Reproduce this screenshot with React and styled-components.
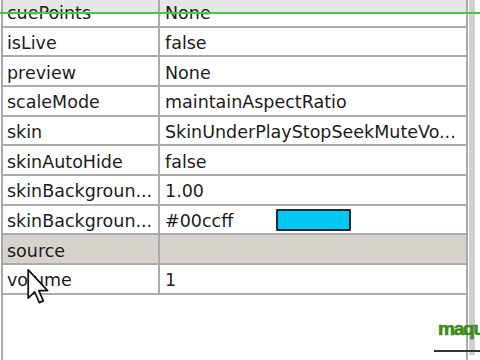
//-----------------------------------------------------------------------------
// Imports
//-----------------------------------------------------------------------------
import React from 'react'
import styled, { createGlobalStyle } from 'styled-components'

//-----------------------------------------------------------------------------
// Data
//-----------------------------------------------------------------------------
const rows = [
  { name: 'cuePoints', value: 'None', top: true },
  { name: 'isLive', value: 'false' },
  { name: 'preview', value: 'None' },
  { name: 'scaleMode', value: 'maintainAspectRatio' },
  { name: 'skin', value: 'SkinUnderPlayStopSeekMuteVo...' },
  { name: 'skinAutoHide', value: 'false' },
  { name: 'skinBackgroun...', value: '1.00' },
  { name: 'skinBackgroun...', value: '#00ccff', swatch: '#00c6f2' },
  { name: 'source', value: '', group: true },
  { name: 'volume', value: '1' }
]

//-----------------------------------------------------------------------------
// Component
//-----------------------------------------------------------------------------
const App = () => {
  return (
    <>
      <GlobalStyle />
      <Screen>
        <Panel>
          <Grid>
            {rows.map((row, i) => (
              <Row key={i} group={row.group} top={row.top}>
                <NameCell>{row.name}</NameCell>
                <ValueCell>
                  {row.value}
                  {row.swatch && <Swatch color={row.swatch} />}
                </ValueCell>
              </Row>
            ))}
          </Grid>
        </Panel>
        <Gutter />
        <Edge />
        <GreenLine />
        <Cursor width="23" height="36" viewBox="0 0 13 21">
          <path
            d="M0.5 0.5 L0.5 17 L4.3 13.4 L7 19.6 L9.3 18.6 L6.7 12.6 L11.8 12.6 Z"
            fill="#fff"
            stroke="#111"
            strokeWidth="1"
            strokeLinejoin="round" />
        </Cursor>
        <Logo>maqu</Logo>
      </Screen>
    </>
  )
}

//-----------------------------------------------------------------------------
// Styled Components
//-----------------------------------------------------------------------------
const GlobalStyle = createGlobalStyle`
  html, body {
    margin: 0;
    padding: 0;
    background: #fff;
  }
`

const Screen = styled.div`
  position: relative;
  width: 480px;
  height: 360px;
  overflow: hidden;
  display: flex;
  font-family: "DejaVu Sans", Verdana, sans-serif;
  font-size: 17.5px;
  color: #1c1c1c;
`

const Panel = styled.div`
  width: 463px;
  height: 100%;
  margin-left: 1px;
  border-left: 2px solid #a9a9a9;
  border-right: 2px solid #a9a9a9;
  background: #fff;
`

const Gutter = styled.div`
  width: 6px;
  height: 355px;
  margin-left: 1px;
  background: #cfcfcf;
`

const Edge = styled.div`
  flex: 1;
  background: #fff;
`

const Grid = styled.div`
  margin-top: -2px;
  display: grid;
  grid-auto-rows: 29.67px;
`

const Row = styled.div`
  display: grid;
  grid-template-columns: 157px 1fr;
  border-bottom: 2px solid #ababab;
  background: ${ p => p.group ? '#d6d3cd' : p.top ? 'linear-gradient(#e6e6e6 0 15px, #fff 15px)' : '#fff' };
`

const NameCell = styled.div`
  display: flex;
  align-items: center;
  padding: 3px 0 0 4px;
  border-right: 2px solid #ababab;
  white-space: nowrap;
  overflow: hidden;
`

const ValueCell = styled.div`
  display: flex;
  align-items: center;
  padding: 3px 0 0 5px;
  white-space: nowrap;
  overflow: hidden;
`

const Swatch = styled.span`
  width: 71px;
  height: 18px;
  margin: -2px 0 0 43px;
  border: 2px solid #1d2a30;
  border-radius: 1px;
  background: ${ p => p.color };
`

const GreenLine = styled.div`
  position: absolute;
  left: 0;
  right: 0;
  top: 12px;
  height: 2px;
  background: #3fcc3f;
`

const Cursor = styled.svg`
  position: absolute;
  left: 27px;
  top: 269px;
`

const Logo = styled.div`
  position: absolute;
  left: 434px;
  top: 318px;
  width: 44px;
  padding: 0 0 10px 4px;
  font-family: "Liberation Sans", Arial, sans-serif;
  font-weight: bold;
  font-size: 19px;
  letter-spacing: -1.2px;
  -webkit-text-stroke: 0.7px #3f8a1c;
  color: #3f8a1c;
  border-bottom: 2px solid #333;
`

export default App
